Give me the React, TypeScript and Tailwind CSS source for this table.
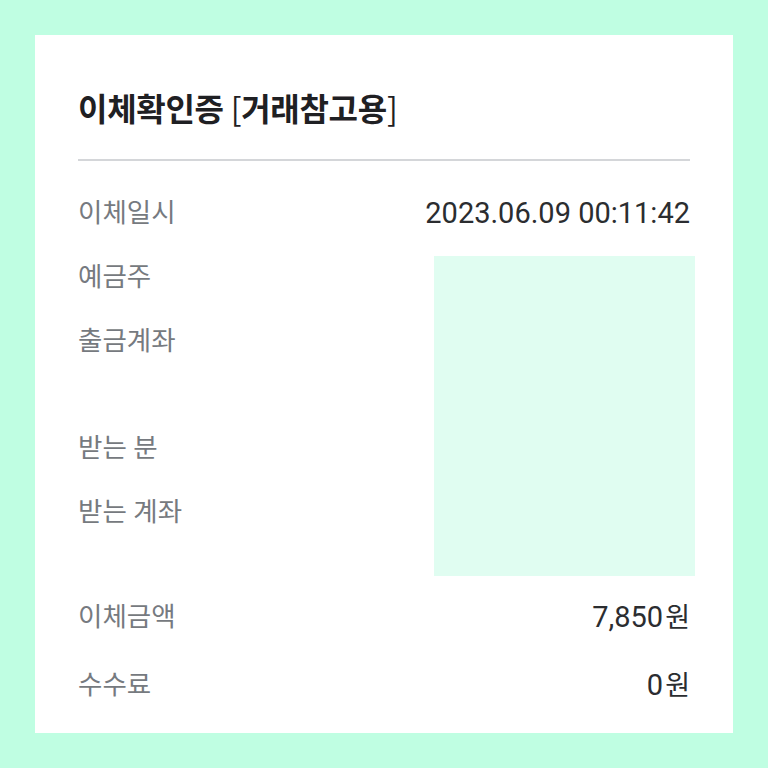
export default function App() {
  const font = { fontFamily: 'Roboto, "Noto Sans CJK KR", "Noto Sans", sans-serif' };
  const Row = ({ label, value, className = "" }: { label: string; value?: React.ReactNode; className?: string }) => (
    <div className={`flex h-[64px] items-center justify-between ${className}`}>
      <span className="text-[26.5px] leading-none text-[#767a80]">{label}</span>
      {value !== undefined && <span className="text-[29px] leading-none text-[#2b2d30]">{value}</span>}
    </div>
  );
  return (
    <div className="w-[768px] h-[768px] bg-[#bffee2] p-[35px]" style={font}>
      <div className="relative h-full bg-white px-[43px]">
        <h1
          className="pt-[52px] pb-[32px] text-[32px] font-bold leading-[40px] text-[#1f2023] tracking-[-0.3px]"
          style={{ fontFamily: '"Noto Sans CJK KR", sans-serif' }}
        >
          이체확인증 <span className="font-normal">[</span>거래참고용<span className="font-normal">]</span>
        </h1>
        <div className="h-[2px] bg-[#d4d6d9]" />
        <div className="pt-[20px]">
          <Row label="이체일시" value="2023.06.09 00:11:42" />
          <Row label="예금주" />
          <Row label="출금계좌" />
          <Row label="받는 분" className="mt-[43px]" />
          <Row label="받는 계좌" />
          <Row label="이체금액" className="mt-[41px]" value={<>7,850<span className="ml-[2px] text-[27px]">원</span></>} />
          <Row label="수수료" className="mt-[4px]" value={<>0<span className="ml-[2px] text-[27px]">원</span></>} />
        </div>
        <div className="absolute left-[399px] top-[221px] h-[320px] w-[261px] bg-[#e0fdf1]" />
      </div>
    </div>
  );
}
